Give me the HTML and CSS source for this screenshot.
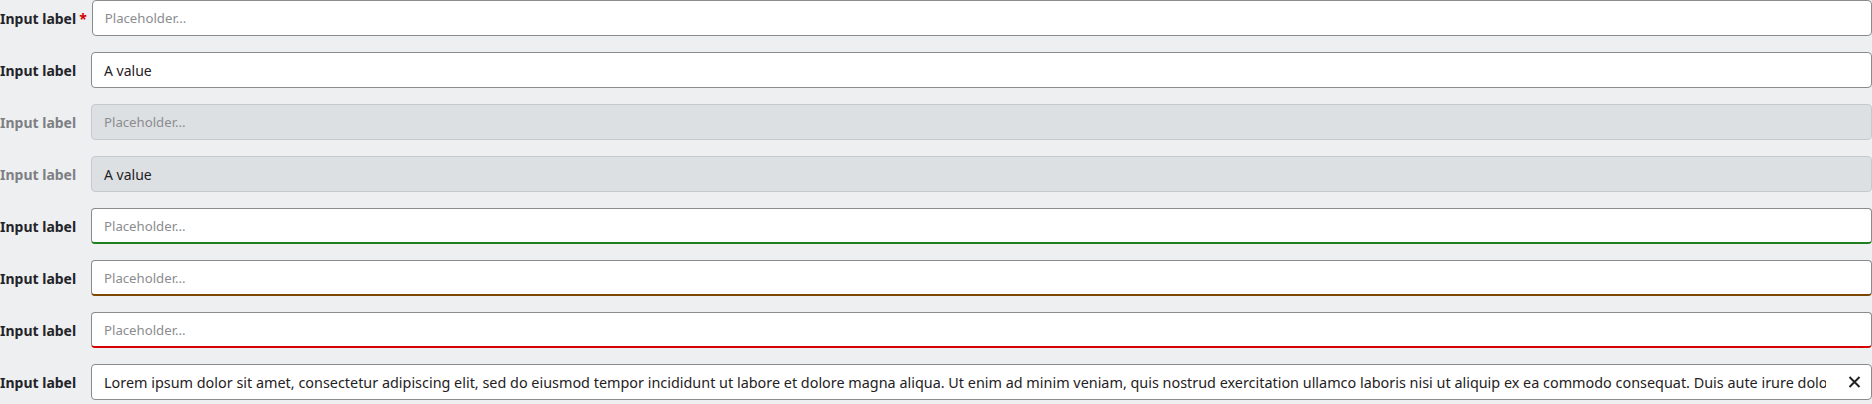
FILE: index.html
```html
<!DOCTYPE html>
<html lang="en">
<head>
<meta charset="utf-8">
<title>Inputs</title>
<link rel="stylesheet" href="styles.css">
</head>
<body>
<div class="form">
  <div class="row">
    <label class="label">Input label<span class="req">*</span></label>
    <div class="field"><span class="ph">Placeholder...</span></div>
  </div>
  <div class="row">
    <label class="label">Input label</label>
    <div class="field"><span class="val">A value</span></div>
  </div>
  <div class="row disabled">
    <label class="label">Input label</label>
    <div class="field"><span class="ph">Placeholder...</span></div>
  </div>
  <div class="row disabled">
    <label class="label">Input label</label>
    <div class="field"><span class="val">A value</span></div>
  </div>
  <div class="row">
    <label class="label">Input label</label>
    <div class="field success"><span class="ph">Placeholder...</span></div>
  </div>
  <div class="row">
    <label class="label">Input label</label>
    <div class="field warning"><span class="ph">Placeholder...</span></div>
  </div>
  <div class="row">
    <label class="label">Input label</label>
    <div class="field error"><span class="ph">Placeholder...</span></div>
  </div>
  <div class="row">
    <label class="label">Input label</label>
    <div class="field clearable">
      <span class="val long">Lorem ipsum dolor sit amet, consectetur adipiscing elit, sed do eiusmod tempor incididunt ut labore et dolore magna aliqua. Ut enim ad minim veniam, quis nostrud exercitation ullamco laboris nisi ut aliquip ex ea commodo consequat. Duis aute irure dolor in reprehenderit in voluptate velit esse cillum dolore eu fugiat nulla pariatur.</span>
      <span class="clear"><svg width="13" height="12" viewBox="0 0 13 12"><path d="M1.5 1L11.5 11M11.5 1L1.5 11" stroke="#222" stroke-width="2" fill="none"/></svg></span>
    </div>
  </div>
</div>
</body>
</html>
```

FILE: styles.css
```css
html, body {
  margin: 0;
  padding: 0;
  background: #eeeff1;
  font-family: "Noto Sans", "Open Sans", sans-serif;
}
.form {
  display: flex;
  flex-direction: column;
  gap: 16px;
}
.row {
  display: flex;
  align-items: center;
  height: 36px;
}
.label {
  flex: none;
  min-width: 86px;
  margin-right: 5px;
  font-size: 14px;
  font-weight: 700;
  color: #222428;
  white-space: nowrap;
}
.req {
  color: #d40000;
  margin-left: 3px;
}
.field {
  flex: 1;
  min-width: 0;
  height: 36px;
  box-sizing: border-box;
  border: 1px solid #8a8b8d;
  border-radius: 4px;
  background: #fff;
  display: flex;
  align-items: center;
  padding: 0 12px;
  font-size: 14px;
  overflow: hidden;
}
.ph {
  color: #8a8c90;
  font-size: 13.2px;
}
.val {
  color: #1f2124;
}
.disabled .label {
  color: #7d7f83;
}
.disabled .field {
  background: #dde0e3;
  border-color: #c6cacf;
}
.success { border-bottom: 2px solid #1d7f1d; }
.warning { border-bottom: 2px solid #7a4600; }
.error { border-bottom: 2px solid #d60000; }
.clearable {
  padding-right: 0;
}
.long {
  flex: 1;
  min-width: 0;
  white-space: nowrap;
  overflow: hidden;
  font-size: 14.4px;
  margin-right: 11px;
}
.clear {
  flex: none;
  width: 34px;
  display: flex;
  align-items: center;
  justify-content: center;
}
```
